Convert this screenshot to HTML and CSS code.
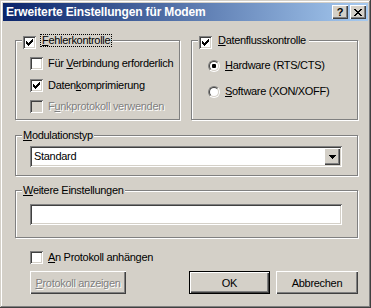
FILE: index.html
```html
<!DOCTYPE html>
<html lang="de">
<head>
  <meta charset="UTF-8">
  <meta name="viewport" content="width=device-width, initial-scale=1.0">
  <title>Erweiterte Einstellungen für Modem</title>
  <link rel="stylesheet" href="styles.css">
</head>

<body>
  <div class="window">
    <div class="titlebar">
      <span class="title">Erweiterte Einstellungen für Modem</span>
      <span class="caption-btn help">?</span>
      <span class="caption-btn close">
        <svg width="8" height="7" viewBox="0 0 8 7" shape-rendering="crispEdges"><path d="M0 0h2v1H0zM6 0h2v1H6zM1 1h2v1H1zM5 1h2v1H5zM2 2h4v1H2zM3 3h2v1H3zM2 4h4v1H2zM1 5h2v1H1zM5 5h2v1H5zM0 6h2v1H0zM6 6h2v1H6z"/></svg>
      </span>
    </div>

    <div class="client">
      <div class="top-row">
        <fieldset class="group group-error">
          <legend class="legend-check">
            <span class="checkbox"><svg width="7" height="7" viewBox="0 0 7 7" shape-rendering="crispEdges"><path d="M0 2h1v3H0zM1 3h1v3H1zM2 4h1v3H2zM3 3h1v3H3zM4 2h1v3H4zM5 1h1v3H5zM6 0h1v3H6z"/></svg></span>
            <span class="caption focus"><u>F</u>ehlerkontrolle</span>
          </legend>
          <div class="group-body body-error">
            <div class="opt">
              <span class="checkbox"></span>
              <span class="opt-text">Für <u>V</u>erbindung erforderlich</span>
            </div>
            <div class="opt">
              <span class="checkbox"><svg width="7" height="7" viewBox="0 0 7 7" shape-rendering="crispEdges"><path d="M0 2h1v3H0zM1 3h1v3H1zM2 4h1v3H2zM3 3h1v3H3zM4 2h1v3H4zM5 1h1v3H5zM6 0h1v3H6z"/></svg></span>
              <span class="opt-text">Daten<u>k</u>omprimierung</span>
            </div>
            <div class="opt disabled">
              <span class="checkbox"></span>
              <span class="opt-text">F<u>u</u>nkprotokoll verwenden</span>
            </div>
          </div>
        </fieldset>

        <fieldset class="group group-flow">
          <legend class="legend-check">
            <span class="checkbox"><svg width="7" height="7" viewBox="0 0 7 7" shape-rendering="crispEdges"><path d="M0 2h1v3H0zM1 3h1v3H1zM2 4h1v3H2zM3 3h1v3H3zM4 2h1v3H4zM5 1h1v3H5zM6 0h1v3H6z"/></svg></span>
            <span class="caption"><u>D</u>atenflusskontrolle</span>
          </legend>
          <div class="group-body body-flow">
            <div class="opt">
              <span class="radio checked"><span class="radio-inner"></span></span>
              <span class="opt-text"><u>H</u>ardware (RTS/CTS)</span>
            </div>
            <div class="opt">
              <span class="radio"><span class="radio-inner"></span></span>
              <span class="opt-text"><u>S</u>oftware (XON/XOFF)</span>
            </div>
          </div>
        </fieldset>
      </div>

      <fieldset class="group group-wide group-modulation">
        <legend><u>M</u>odulationstyp</legend>
        <div class="group-body body-modulation">
          <div class="combo">
            <span class="combo-value">Standard</span>
            <span class="combo-arrow">
              <svg width="7" height="4" viewBox="0 0 7 4" shape-rendering="crispEdges"><path d="M0 0h7v1H0zM1 1h5v1H1zM2 2h3v1H2zM3 3h1v1H3z"/></svg>
            </span>
          </div>
        </div>
      </fieldset>

      <fieldset class="group group-wide group-more">
        <legend><u>W</u>eitere Einstellungen</legend>
        <div class="group-body body-more">
          <input class="edit" type="text" value="">
        </div>
      </fieldset>

      <div class="opt log-row">
        <span class="checkbox"></span>
        <span class="opt-text"><u>A</u>n Protokoll anhängen</span>
      </div>

      <div class="button-row">
        <button class="btn btn-log" disabled><u>P</u>rotokoll anzeigen</button>
        <button class="btn btn-ok">OK</button>
        <button class="btn btn-cancel">Abbrechen</button>
      </div>
    </div>
  </div>
</body>
</html>
```

FILE: styles.css
```css
body {
margin: 0;
background-color: #d4d0c8;
font-family: "Liberation Sans", Arial, sans-serif;
font-size: 11px;
letter-spacing: -0.3px;
color: #000;
}

.window {
width: 371px;
height: 308px;
box-sizing: border-box;
padding: 3px;
background-color: #d4d0c8;
box-shadow: inset -1px -1px #404040, inset 1px 1px #d4d0c8, inset -2px -2px #808080, inset 2px 2px #fff;
}

/* title bar */
.titlebar {
display: flex;
align-items: center;
height: 18px;
padding: 0 2px 0 3px;
background: linear-gradient(to right, #0a246a, #a6caf0);
}

.title {
flex: 1;
color: #fff;
font-weight: bold;
font-size: 12px;
letter-spacing: -0.15px;
white-space: nowrap;
}

.caption-btn {
display: flex;
align-items: center;
justify-content: center;
width: 16px;
height: 14px;
background-color: #d4d0c8;
box-shadow: inset 1px 1px #fff, inset -1px -1px #404040, inset -2px -2px #808080;
}

.caption-btn.help {
font-weight: bold;
font-size: 11px;
letter-spacing: 0;
line-height: 14px;
}

.caption-btn.close {
margin-left: 2px;
}

/* dialog body */
.client {
padding: 13px 10px 0 12px;
}

.top-row {
display: flex;
gap: 11px;
}

.group {
margin: 0;
padding: 0;
min-width: 0;
border: 1px solid #808080;
box-shadow: inset 1px 1px #fff, 1px 1px #fff;
}

.group legend {
height: 13px;
margin-left: 6px;
padding: 0 1px;
line-height: 13px;
background-color: #d4d0c8;
}

.group-error {
width: 165px;
box-sizing: border-box;
}

.group-flow {
width: 167px;
box-sizing: border-box;
}

.legend-check {
display: flex;
align-items: flex-start;
}

.legend-check .checkbox {
margin-top: 2px;
}

.caption {
margin-left: 4px;
padding: 0 1px;
border: 1px dotted transparent;
line-height: 11px;
}

.caption.focus {
border-color: #000;
}

.group-body {
display: flex;
flex-direction: column;
}

.body-error {
padding: 10px 0 6px 14px;
gap: 8.5px;
}

.body-flow {
padding: 12px 0 0 16px;
gap: 13px;
}

.group-modulation {
margin-top: 9px;
}

.body-modulation {
padding: 4px 0 8px 14px;
}

.group-more {
margin-top: 8px;
}

.body-more {
padding: 7px 0 12px 14px;
}

/* checkboxes and radios */
.opt {
display: flex;
align-items: center;
height: 13px;
line-height: 13px;
white-space: nowrap;
}

.opt-text {
margin-left: 5px;
}

.checkbox {
display: flex;
align-items: center;
justify-content: center;
flex: none;
width: 13px;
height: 13px;
background-color: #fff;
box-shadow: inset 1px 1px #808080, inset -1px -1px #fff, inset 2px 2px #404040, inset -2px -2px #d4d0c8;
}

.opt.disabled .checkbox {
background-color: #d4d0c8;
}

.opt.disabled .opt-text {
color: #808080;
text-shadow: 1px 1px 0 #fff;
}

.radio {
flex: none;
width: 12px;
height: 12px;
box-sizing: border-box;
border: 1px solid;
border-color: #808080 #fff #fff #808080;
border-radius: 50%;
}

.radio-inner {
display: flex;
align-items: center;
justify-content: center;
width: 10px;
height: 10px;
box-sizing: border-box;
border: 1px solid;
border-color: #404040 #d4d0c8 #d4d0c8 #404040;
border-radius: 50%;
background-color: #fff;
}

.radio.checked .radio-inner::after {
content: "";
width: 4px;
height: 4px;
border-radius: 1px;
background-color: #000;
}

/* combo box and edit field */
.combo {
display: flex;
width: 312px;
height: 21px;
box-sizing: border-box;
padding: 2px;
background-color: #fff;
box-shadow: inset 1px 1px #808080, inset -1px -1px #fff, inset 2px 2px #404040, inset -2px -2px #d4d0c8;
}

.combo-value {
flex: 1;
padding-left: 2px;
line-height: 17px;
}

.combo-arrow {
display: flex;
align-items: center;
justify-content: center;
width: 16px;
height: 17px;
background-color: #d4d0c8;
box-shadow: inset 1px 1px #fff, inset -1px -1px #404040, inset -2px -2px #808080;
}

.edit {
display: block;
width: 312px;
height: 21px;
box-sizing: border-box;
margin: 0;
padding: 0 3px;
border: 0;
outline: none;
font: inherit;
background-color: #fff;
box-shadow: inset 1px 1px #808080, inset -1px -1px #fff, inset 2px 2px #404040, inset -2px -2px #d4d0c8;
}

.log-row {
margin: 13px 0 0 15px;
}

/* buttons */
.button-row {
display: flex;
margin: 7px 0 0 15px;
}

.btn {
height: 23px;
box-sizing: border-box;
margin: 0;
padding: 0;
border: 0;
font: inherit;
letter-spacing: inherit;
color: #000;
background-color: #d4d0c8;
box-shadow: inset 1px 1px #fff, inset -1px -1px #404040, inset -2px -2px #808080;
}

.btn:disabled {
color: #808080;
text-shadow: 1px 1px 0 #fff;
}

.btn-log {
width: 96px;
}

.btn-ok {
width: 81px;
margin-left: auto;
border: 1px solid #000;
}

.btn-cancel {
width: 82px;
margin-left: 6px;
}
```
